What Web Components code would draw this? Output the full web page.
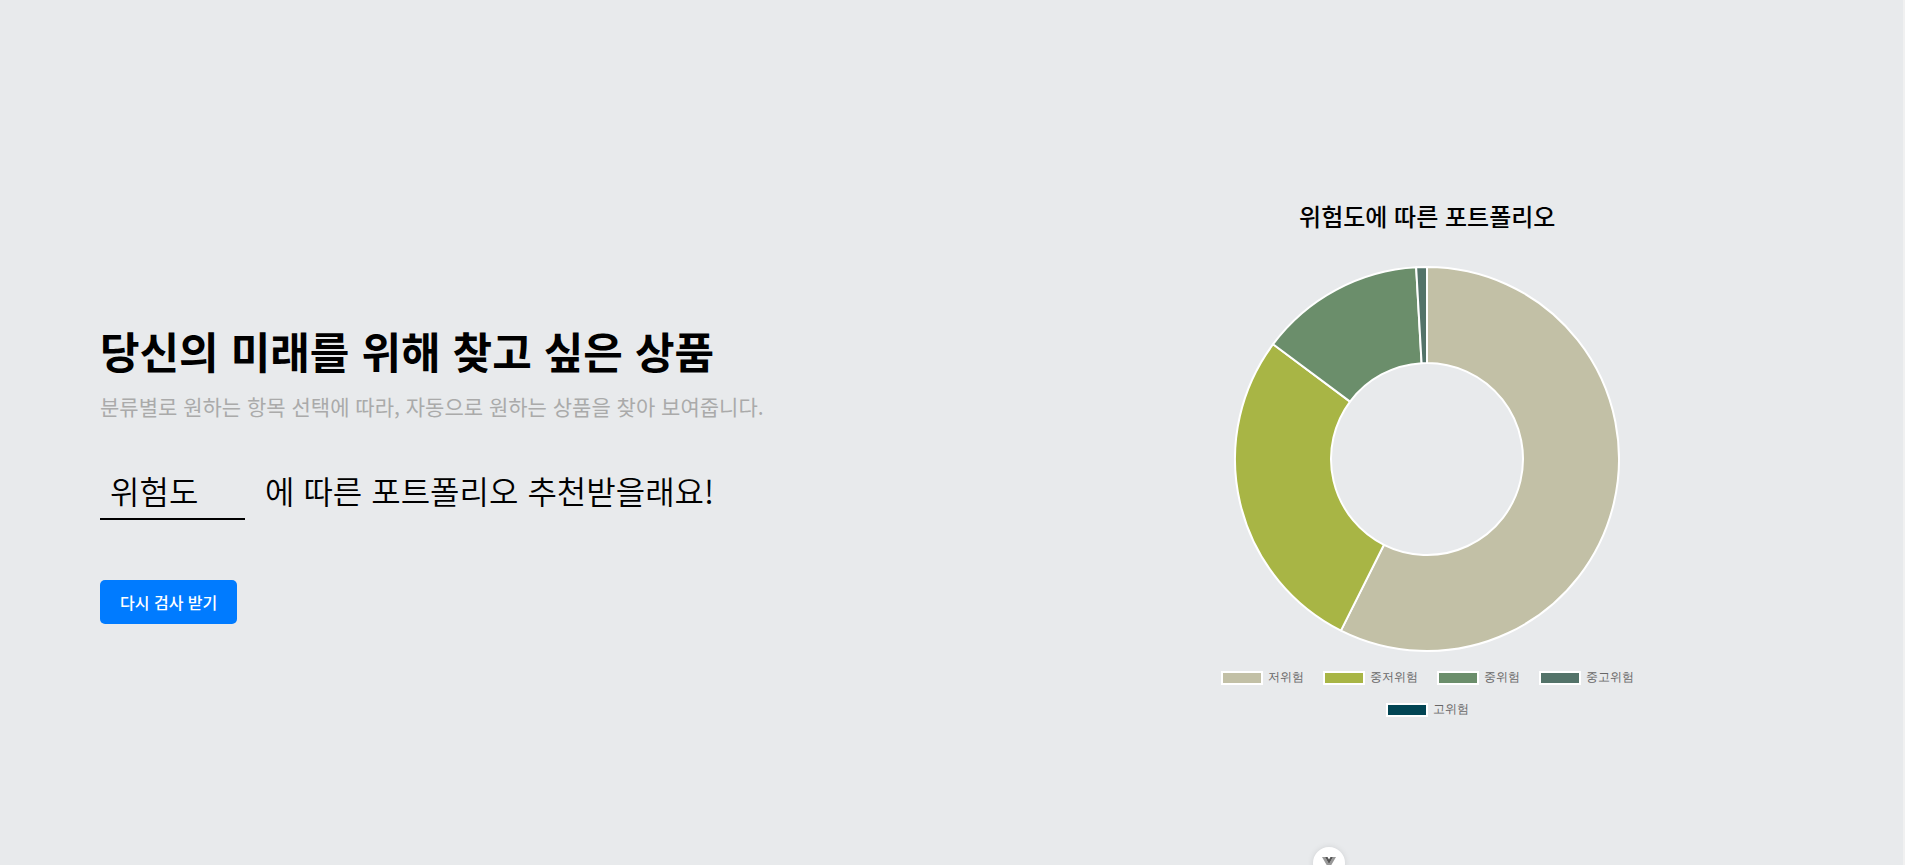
<!DOCTYPE html>
<html lang="ko">
<head>
<meta charset="utf-8">
<meta name="viewport" content="width=device-width, initial-scale=1">
<title>포트폴리오 추천</title>
<style>
  html { background: #f1f1f1; }
  body { margin: 0; font-family: "Noto Sans CJK KR", "Noto Sans", sans-serif; color: #000; }
</style>
</head>
<body>
<portfolio-page>
  <portfolio-intro slot="intro" heading="당신의 미래를 위해 찾고 싶은 상품">
    <span slot="description">분류별로 원하는 항목 선택에 따라, 자동으로 원하는 상품을 찾아 보여줍니다.</span>
    <criteria-select slot="criteria">에 따른 포트폴리오 추천받을래요!</criteria-select>
    <primary-button slot="action">다시 검사 받기</primary-button>
  </portfolio-intro>
  <doughnut-chart slot="chart" heading="위험도에 따른 포트폴리오"></doughnut-chart>
  <devtools-toggle slot="tools"></devtools-toggle>
</portfolio-page>

<script>
class BaseElement extends HTMLElement {
  render(markup) {
    this.attachShadow({ mode: 'open' }).innerHTML = markup;
  }
}

customElements.define('portfolio-page', class extends BaseElement {
  constructor() {
    super();
    this.render(`
      <style>
        :host { display: block; position: relative; box-sizing: border-box; min-height: 100vh;
                margin-right: 2px; background: #e8eaec; overflow: hidden; }
        main { display: grid; grid-template-columns: 1fr 1fr; align-items: center;
               min-height: 100vh; box-sizing: border-box; padding-top: 50px; }
      </style>
      <main><slot name="intro"></slot><slot name="chart"></slot></main>
      <slot name="tools"></slot>`);
  }
});

customElements.define('portfolio-intro', class extends BaseElement {
  connectedCallback() {
    this.render(`
      <style>
        :host { display: block; padding: 32px 0 0 100px; }
        h1 { margin: 0; font-size: 43px; line-height: 52px; font-weight: 700; }
        p { margin: 14px 0 48px; font-size: 21px; line-height: 32px; color: #aaa; }
        .action { margin-top: 60px; }
      </style>
      <h1>${this.getAttribute('heading')}</h1>
      <p><slot name="description"></slot></p>
      <slot name="criteria"></slot>
      <div class="action"><slot name="action"></slot></div>`);
  }
});

customElements.define('criteria-select', class extends BaseElement {
  constructor() {
    super();
    this.render(`
      <style>
        :host { display: flex; align-items: baseline; gap: 20px; font-size: 32px; line-height: 40px;
                font-weight: 350; }
        select { appearance: none; box-sizing: border-box; width: 145px; height: 48px; margin: 0;
                 padding: 0 10px 10px; border: 0; border-bottom: 2px solid #000; border-radius: 0;
                 background: transparent; color: inherit; font: inherit; line-height: 36px; }
      </style>
      <select id="criteria"><option>위험도</option><option>수익률</option></select>
      <label for="criteria"><slot></slot></label>`);
  }
});

customElements.define('primary-button', class extends BaseElement {
  constructor() {
    super();
    this.render(`
      <style>
        :host { display: inline-block; vertical-align: top; }
        button { display: block; height: 44px; padding: 0 20px; border: 0; border-radius: 5px;
                 background: #007bff; color: #fff; font: inherit; font-size: 16px;
                 font-weight: 500; line-height: 24px; }
      </style>
      <button type="button"><slot></slot></button>`);
  }
});

customElements.define('doughnut-chart', class extends BaseElement {
  connectedCallback() {
    const data = [
      ['저위험', 57.4, '#c2c0a6'],
      ['중저위험', 27.8, '#a8b545'],
      ['중위험', 13.9, '#6b8e6b'],
      ['중고위험', 0.9, '#537369'],
      ['고위험', 0, '#024554'],
    ];
    const point = (share, radius) => {
      const angle = share / 100 * 2 * Math.PI;
      return `${(radius * Math.sin(angle)).toFixed(2)} ${(-radius * Math.cos(angle)).toFixed(2)}`;
    };
    let start = 0;
    const slices = data.filter(([, share]) => share > 0).map(([, share, color]) => {
      const end = start + share;
      const large = share > 50 ? 1 : 0;
      const path = `M${point(start, 192)}A192 192 0 ${large} 1 ${point(end, 192)}` +
        `L${point(end, 96)}A96 96 0 ${large} 0 ${point(start, 96)}Z`;
      start = end;
      return `<path d="${path}" fill="${color}"/>`;
    }).join('');
    const legend = data.map(([name, , color]) =>
      `<li><i style="background:${color}"></i>${name}</li>`).join('');
    this.render(`
      <style>
        :host { display: flex; flex-direction: column; align-items: center; }
        h2 { margin: 0 0 32px; font-size: 24px; line-height: 36px; font-weight: 500; }
        svg { display: block; width: 386px; height: 386px; }
        path { stroke: #fff; stroke-width: 2; stroke-linejoin: bevel; }
        ul { display: flex; flex-wrap: wrap; justify-content: center; gap: 18px 19px;
             max-width: 440px; margin: 19px 0 0; padding: 0; list-style: none;
             font-family: sans-serif; font-size: 12px; line-height: 12px; color: #666; }
        li { display: flex; align-items: flex-start; gap: 5px; }
        i { box-sizing: border-box; width: 42px; height: 14px; border: 2px solid #fff; }
      </style>
      <h2>${this.getAttribute('heading')}</h2>
      <svg viewBox="-193 -193 386 386" role="img" aria-label="${this.getAttribute('heading')}">${slices}</svg>
      <ul>${legend}</ul>`);
  }
});

customElements.define('devtools-toggle', class extends BaseElement {
  constructor() {
    super();
    this.render(`
      <style>
        :host { position: absolute; left: 69%; bottom: -14px; }
        button { display: flex; align-items: center; justify-content: center; width: 32px; height: 32px;
                 padding: 0; border: 0; border-radius: 50%; background: #fff;
                 box-shadow: 0 0 6px rgba(0, 0, 0, 0.1); }
        svg { width: 14px; height: 14px; }
      </style>
      <button type="button" aria-label="Vue DevTools">
        <svg viewBox="0 0 14 14"><path d="M0 1h3l4 7 4-7h3L7 13z" fill="#999"/><path d="M3 1h2.500l1.500 2.500L8.500 1H11L7 8z" fill="#555"/></svg>
      </button>`);
  }
});
</script>
</body>
</html>
